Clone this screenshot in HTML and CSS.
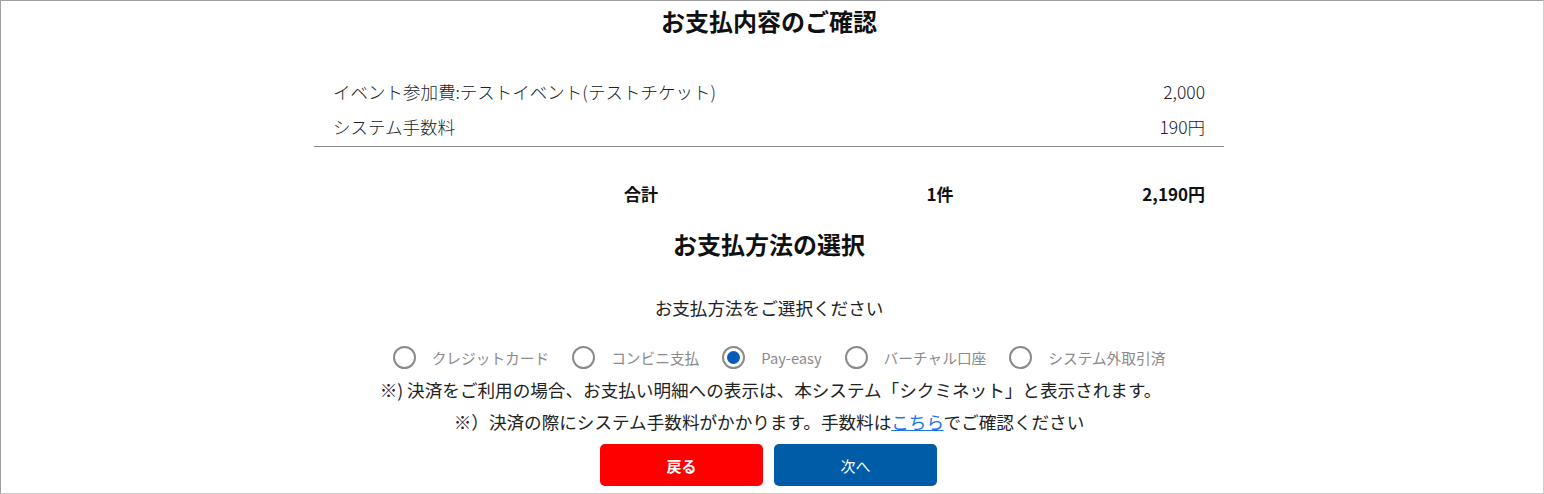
FILE: index.html
```html
<!DOCTYPE html>
<html lang="ja">
<head>
<meta charset="utf-8">
<title>お支払内容のご確認</title>
<link rel="stylesheet" href="styles.css">
</head>
<body>
<div class="frame">
  <h1 class="title">お支払内容のご確認</h1>
  <div class="items">
    <div class="item">
      <span class="item-name">イベント参加費:テストイベント(テストチケット)</span>
      <span class="item-price">2,000</span>
    </div>
    <div class="item">
      <span class="item-name">システム手数料</span>
      <span class="item-price">190円</span>
    </div>
  </div>
  <div class="total">
    <span></span>
    <span class="total-label">合計</span>
    <span class="total-count">1件</span>
    <span class="total-sum">2,190円</span>
  </div>
  <h2 class="title title-sub">お支払方法の選択</h2>
  <p class="prompt">お支払方法をご選択ください</p>
  <div class="methods">
    <label class="method"><input type="radio" name="pay" class="radio"><span>クレジットカード</span></label>
    <label class="method"><input type="radio" name="pay" class="radio"><span>コンビニ支払</span></label>
    <label class="method"><input type="radio" name="pay" class="radio" checked><span>Pay-easy</span></label>
    <label class="method"><input type="radio" name="pay" class="radio"><span>バーチャル口座</span></label>
    <label class="method"><input type="radio" name="pay" class="radio"><span>システム外取引済</span></label>
  </div>
  <p class="note note-1">※) 決済をご利用の場合、お支払い明細への表示は、本システム「シクミネット」と表示されます。</p>
  <p class="note">※）決済の際にシステム手数料がかかります。手数料は<a href="#" class="link">こちら</a>でご確認ください</p>
  <div class="actions">
    <button class="btn btn-back">戻る</button>
    <button class="btn btn-next">次へ</button>
  </div>
</div>
</body>
</html>
```

FILE: styles.css
```css
* { box-sizing: border-box; }
html, body { margin: 0; padding: 0; background: #fff; }
body {
  font-family: "Noto Sans CJK JP", "Noto Sans", sans-serif;
  color: #222;
}
.frame {
  width: 1544px;
  height: 494px;
  overflow: hidden;
  border-top: 1px solid #a0a0a0;
  border-left: 1px solid #a0a0a0;
  border-right: 1px solid #cfcfcf;
  border-bottom: 1px solid #cfcfcf;
  padding-right: 6px;
  display: flex;
  flex-direction: column;
}
.title {
  margin: 3px 0 0;
  font-size: 24px;
  line-height: 34px;
  font-weight: 700;
  text-align: center;
  color: #111;
}
.items {
  width: 910px;
  margin: 38px auto 0;
  border-bottom: 1px solid #888;
}
.item {
  display: flex;
  justify-content: space-between;
  padding: 0 19px;
  height: 35px;
  line-height: 32px;
  font-size: 17.5px;
  font-weight: 300;
  color: #222;
}
.total {
  width: 910px;
  margin: 30px auto 0;
  display: grid;
  grid-template-columns: 162px 330px 268px 1fr;
  height: 35px;
  line-height: 34px;
  font-size: 17px;
  font-weight: 700;
  color: #111;
}
.total-label, .total-count { text-align: center; }
.total-sum { text-align: right; padding-right: 19px; }
.title-sub { margin-top: 15px; }
.prompt {
  margin: 32px 0 0;
  text-align: center;
  font-size: 17.6px;
  line-height: 30px;
  font-weight: 400;
  color: #222;
}
.methods {
  margin-top: 17px;
  height: 34px;
  display: flex;
  justify-content: center;
  align-items: center;
  gap: 23px;
  padding-left: 20px;
}
.method {
  display: flex;
  align-items: center;
  gap: 16px;
  font-size: 14.7px;
  color: #8a8a8a;
}
.radio {
  appearance: none;
  -webkit-appearance: none;
  margin: 0;
  width: 23px;
  height: 23px;
  border: 2px solid #8a8a8a;
  border-radius: 50%;
  display: grid;
  place-items: center;
  background: #fff;
}
.radio:checked::after {
  content: "";
  width: 13px;
  height: 13px;
  border-radius: 50%;
  background: #0a5bb8;
}
.note {
  margin: 0;
  text-align: center;
  font-size: 17.6px;
  line-height: 32px;
  color: #222;
}
.note-1 { padding-left: 3px; }
.link { color: #1a73e8; text-decoration: underline; }
.actions {
  margin-top: 6px;
  display: flex;
  justify-content: center;
  gap: 11px;
  padding-right: 1px;
}
.btn {
  width: 163px;
  height: 42px;
  border: none;
  border-radius: 5px;
  color: #fff;
  font-family: "Noto Sans CJK JP", "Noto Sans", sans-serif;
  font-size: 15px;
}
.btn-back { background: #ff0000; font-weight: 700; }
.btn-next { background: #005ca7; font-weight: 400; }
```
